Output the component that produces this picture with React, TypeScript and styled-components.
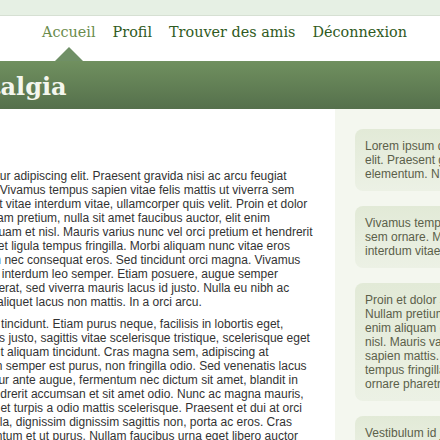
import React from "react";
import styled, { createGlobalStyle, css } from "styled-components";

const GlobalStyle = createGlobalStyle`
  html, body { margin: 0; padding: 0; overflow: hidden; background: #ffffff; }
  body { font-family: "Liberation Sans", Arial, sans-serif; }
`;

const Page = styled.div`
  width: 100%;
  overflow: hidden;
`;

const TopBar = styled.div`
  height: 15px;
  background: #e6f0e4;
  border-bottom: 1px solid #d6e0d3;
`;

const NavBar = styled.nav`
  display: flex;
  justify-content: center;
  background: #ffffff;
  height: 45px;
`;

const NavList = styled.ul`
  list-style: none;
  margin: 0;
  padding: 8px 0 0 9px;
  height: 100%;
  box-sizing: border-box;
  display: flex;
  gap: 17px;
`;

const NavItem = styled.li<{ $active?: boolean }>`
  position: relative;
  height: 100%;
  font-family: "DejaVu Serif", serif;
  font-size: 14.4px;
  line-height: 17px;
  color: ${(p) => (p.$active ? "#6b8c4c" : "#2f5a22")};
  ${(p) =>
    p.$active &&
    css`
      &::after {
        content: "";
        position: absolute;
        left: 50%;
        bottom: 0;
        transform: translateX(-50%);
        border-left: 14px solid transparent;
        border-right: 14px solid transparent;
        border-bottom: 14px solid #6f8f66;
      }
    `}
`;

const Band = styled.header`
  height: 48px;
  background: linear-gradient(#70905f, #55704c);
  display: flex;
  justify-content: center;
`;

const Centered = styled.div`
  display: flex;
  justify-content: center;
`;

const Frame = styled.div`
  flex: 0 0 900px;
  width: 900px;
  display: flex;
`;

const Title = styled.h1`
  margin: 0;
  padding: 12px 0 0 168px;
  font: bold 24px/28px "DejaVu Serif", serif;
  color: #f4f6ee;
`;

const Main = styled.main`
  width: 565px;
  box-sizing: border-box;
  padding: 60px 30px 0 27px;
  color: #333333;
  font-size: 12px;
  line-height: 14px;
`;

const Para = styled.p`
  margin: 0 0 8px;
  white-space: nowrap;
`;

const Line = styled.span`
  display: block;
`;

const Sidebar = styled.aside`
  flex: 1;
  background: #f4f7ef;
  padding: 20px;
  display: flex;
  flex-direction: column;
  gap: 15px;
`;

const Box = styled.div`
  background: linear-gradient(#e2ead7, #ecf1e5);
  border-radius: 8px;
  padding: 10px;
  color: #5b604a;
  font-size: 12px;
  line-height: 14px;
  white-space: nowrap;
  overflow: hidden;
`;

const para1 = [
  "Lorem ipsum dolor sit amet, consectetur adipiscing elit. Praesent gravida nisi ac arcu feugiat",
  "Donec at lacus ut risus pulvinar nunc. Vivamus tempus sapien vitae felis mattis ut viverra sem",
  "Maecenas lectus neque id urna aliquet vitae interdum vitae, ullamcorper quis velit. Proin et dolor",
  "sit amet magna tincidunt semper. Nullam pretium, nulla sit amet faucibus auctor, elit enim",
  "ultrices nibh, vitae luctus ipsum et aliquam et nisl. Mauris varius nunc vel orci pretium et hendrerit",
  "massa. Suspendisse potenti. Sed est et ligula tempus fringilla. Morbi aliquam nunc vitae eros",
  "ultricies, at feugiat nisl pharetra rutrum nec consequat eros. Sed tincidunt orci magna. Vivamus",
  "vehicula nibh quis massa lacinia dolor interdum leo semper. Etiam posuere, augue semper",
  "ornare ut. Sed sagittis molestie quam erat, sed viverra mauris lacus id justo. Nulla eu nibh ac",
  "lectus, eget tincidunt mauris pharetra aliquet lacus non mattis. In a orci arcu.",
];

const para2 = [
  "Pellentesque commodo dui vel nisl ac tincidunt. Etiam purus neque, facilisis in lobortis eget,",
  "vestibulum vel tortor. Integer odio lacus justo, sagittis vitae scelerisque tristique, scelerisque eget",
  "nunc. Donec accumsan pretium felis ut aliquam tincidunt. Cras magna sem, adipiscing at",
  "lorem. Vestibulum ante ipsum primis in semper est purus, non fringilla odio. Sed venenatis lacus",
  "metus, id facilisis ultricies nisi. Curabitur ante augue, fermentum nec dictum sit amet, blandit in",
  "tellus quis ornare. Vivamus sed ut hendrerit accumsan et sit amet odio. Nunc ac magna mauris,",
  "in vehicula lectus tincidunt vitae. Nam et turpis a odio mattis scelerisque. Praesent et dui at orci",
  "varius a tincidunt eget quis metus. Nulla, dignissim dignissim sagittis non, porta ac eros. Cras",
  "metus lacus quis nunc ultricies elementum et ut purus. Nullam faucibus urna eget libero auctor",
];

const boxes = [
  ["Lorem ipsum dolor sit amet,", "elit. Praesent gravida nisi", "elementum. Nunc vel orci."],
  ["Vivamus tempus sapien vitae", "sem ornare. Mauris varius", "interdum vitae, ullamcorper"],
  [
    "Proin et dolor sit amet",
    "Nullam pretium, nulla sit",
    "enim aliquam et nisl.",
    "nisl. Mauris varius nunc",
    "sapien mattis. Morbi",
    "tempus fringilla. Morbi",
    "ornare pharetra.",
  ],
  ["Vestibulum id justo, sagittis", "vitae scelerisque tristique."],
];

const navItems = ["Accueil", "Profil", "Trouver des amis", "Déconnexion"];

export default function App() {
  return (
    <Page>
      <GlobalStyle />
      <TopBar />
      <NavBar>
        <NavList>
          {navItems.map((n, i) => (
            <NavItem key={n} $active={i === 0}>
              {n}
            </NavItem>
          ))}
        </NavList>
      </NavBar>
      <Band>
        <Frame>
          <Title>Nostalgia</Title>
        </Frame>
      </Band>
      <Centered>
        <Frame>
          <Main>
            <Para>
              {para1.map((l, i) => (
                <Line key={i}>{l}</Line>
              ))}
            </Para>
            <Para>
              {para2.map((l, i) => (
                <Line key={i}>{l}</Line>
              ))}
            </Para>
          </Main>
          <Sidebar>
            {boxes.map((b, i) => (
              <Box key={i}>
                {b.map((l, j) => (
                  <Line key={j}>{l}</Line>
                ))}
              </Box>
            ))}
          </Sidebar>
        </Frame>
      </Centered>
    </Page>
  );
}
